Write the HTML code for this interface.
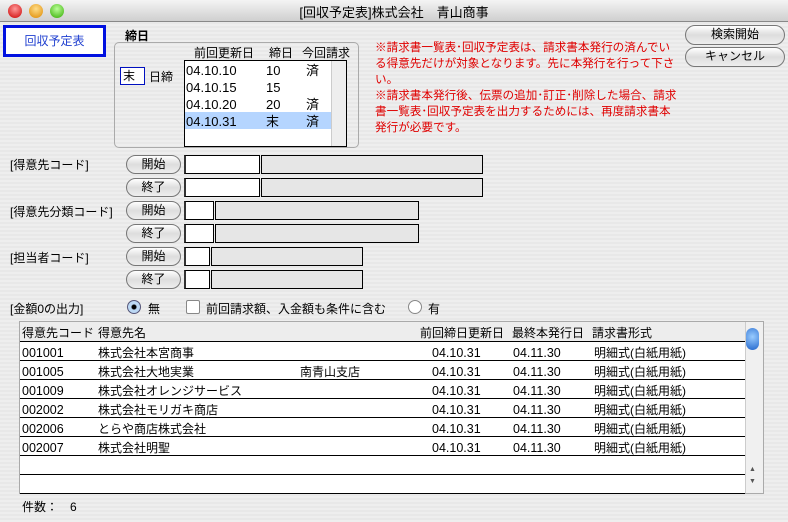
<!DOCTYPE html><html><head><meta charset="utf-8"><style>
*{margin:0;padding:0;box-sizing:border-box}
body{width:788px;height:522px;overflow:hidden;background:#ededed repeating-linear-gradient(#eeeeee 0 2px,#e8e8e8 2px 4px);font-family:"Liberation Sans","Noto Sans CJK JP",sans-serif;font-size:12px;color:#000;position:relative}
.a{position:absolute;white-space:nowrap}
.tb{left:0;top:0;width:788px;height:22px;background:linear-gradient(#f4f4f4,#cfcfcf);border-bottom:1px solid #888}
.dot{width:14px;height:14px;border-radius:50%;top:4px}
.btn{background:linear-gradient(#fff,#ddd 50%,#eee);border:1px solid #777;border-radius:10px;text-align:center;font-size:12px;line-height:17px}
.f{background:#fff;border:1px solid #000;border-left:2px solid #333;height:19px}
.g{background:#e6e6e6;border:1px solid #000;height:19px}
.red{color:#e00000;line-height:16px;font-size:11.6px}
.row{left:20px;width:725px;height:19px;border-bottom:1px solid #000;background:#fff}
</style></head><body>
<div class="a tb"></div>
<div class="a dot" style="left:8px;background:radial-gradient(circle at 50% 35%,#f99,#c00)"></div>
<div class="a dot" style="left:29px;background:radial-gradient(circle at 50% 35%,#fd8,#d80)"></div>
<div class="a dot" style="left:50px;background:radial-gradient(circle at 50% 35%,#bf9,#3a0)"></div>
<div class="a" style="left:0;width:788px;top:2px;text-align:center;font-size:13px">[回収予定表]株式会社　青山商事</div>

<div class="a" style="left:3px;top:25px;width:103px;height:32px;border:3px solid #0010e0;background:#fff;color:#2040d0;text-align:center;line-height:26px">回収予定表</div>
<div class="a" style="left:125px;top:27px;font-weight:bold">締日</div>
<div class="a" style="left:114px;top:42px;width:245px;height:106px;border:1px solid #aaa;border-radius:5px"></div>
<div class="a" style="left:120px;top:67px;width:25px;height:18px;border:1px solid #0010c0;background:#fff;line-height:16px;padding-left:2px">末</div>
<div class="a" style="left:149px;top:68px">日締</div>
<div class="a" style="left:194px;top:44px">前回更新日</div>
<div class="a" style="left:269px;top:44px">締日</div>
<div class="a" style="left:302px;top:44px">今回請求</div>
<div class="a" style="left:184px;top:60px;width:163px;height:87px;border:1px solid #000;background:#fff">
<div class="a" style="right:0;top:0;width:15px;height:85px;background:#eee;border-left:1px solid #ccc"></div>
<div class="a" style="left:0;top:51px;width:146px;height:17px;background:#b5d5ff"></div>
<div class="a" style="left:1px;top:1px;font-size:13px;line-height:17px">04.10.10<br>04.10.15<br>04.10.20<br>04.10.31</div>
<div class="a" style="left:81px;top:1px;font-size:13px;line-height:17px">10<br>15<br>20<br>末</div>
<div class="a" style="left:121px;top:1px;font-size:13px;line-height:17px">済<br>&nbsp;<br>済<br>済</div>
</div>

<div class="a red" style="left:375px;top:40px">※請求書一覧表･回収予定表は、請求書本発行の済んでい<br>る得意先だけが対象となります。先に本発行を行って下さ<br>い。<br>※請求書本発行後、伝票の追加･訂正･削除した場合、請求<br>書一覧表･回収予定表を出力するためには、再度請求書本<br>発行が必要です。</div>
<div class="a btn" style="left:685px;top:25px;width:100px;height:20px">検索開始</div>
<div class="a btn" style="left:685px;top:47px;width:100px;height:20px">キャンセル</div>

<div class="a" style="left:10px;top:156px">[得意先コード]</div>
<div class="a btn" style="left:126px;top:155px;width:55px;height:19px">開始</div>
<div class="a btn" style="left:126px;top:178px;width:55px;height:19px">終了</div>
<div class="a f" style="left:184px;top:155px;width:76px"></div><div class="a g" style="left:261px;top:155px;width:222px"></div>
<div class="a f" style="left:184px;top:178px;width:76px"></div><div class="a g" style="left:261px;top:178px;width:222px"></div>

<div class="a" style="left:10px;top:203px">[得意先分類コード]</div>
<div class="a btn" style="left:126px;top:201px;width:55px;height:19px">開始</div>
<div class="a btn" style="left:126px;top:224px;width:55px;height:19px">終了</div>
<div class="a f" style="left:184px;top:201px;width:30px"></div><div class="a g" style="left:215px;top:201px;width:204px"></div>
<div class="a f" style="left:184px;top:224px;width:30px"></div><div class="a g" style="left:215px;top:224px;width:204px"></div>

<div class="a" style="left:10px;top:249px">[担当者コード]</div>
<div class="a btn" style="left:126px;top:247px;width:55px;height:19px">開始</div>
<div class="a btn" style="left:126px;top:270px;width:55px;height:19px">終了</div>
<div class="a f" style="left:184px;top:247px;width:26px"></div><div class="a g" style="left:211px;top:247px;width:152px"></div>
<div class="a f" style="left:184px;top:270px;width:26px"></div><div class="a g" style="left:211px;top:270px;width:152px"></div>

<div class="a" style="left:10px;top:300px">[金額0の出力]</div>
<div class="a" style="left:127px;top:300px;width:14px;height:14px;border-radius:50%;border:1px solid #557;background:radial-gradient(circle,#000 2px,#bcd8f4 3px)"></div>
<div class="a" style="left:148px;top:300px">無</div>
<div class="a" style="left:186px;top:300px;width:14px;height:14px;border:1px solid #888;border-radius:2px;background:#fff"></div>
<div class="a" style="left:206px;top:300px">前回請求額、入金額も条件に含む</div>
<div class="a" style="left:408px;top:300px;width:14px;height:14px;border-radius:50%;border:1px solid #888;background:#fff"></div>
<div class="a" style="left:428px;top:300px">有</div>

<div class="a" style="left:19px;top:321px;width:745px;height:173px;border:1px solid #aaa;background:#fff"></div>
<div class="a" style="left:20px;top:322px;width:725px;height:20px;background:#ededed;border-bottom:1px solid #000"></div>
<div class="a" style="left:22px;top:324px">得意先コード</div><div class="a" style="left:98px;top:324px">得意先名</div><div class="a" style="left:420px;top:324px">前回締日更新日</div><div class="a" style="left:512px;top:324px">最終本発行日</div><div class="a" style="left:592px;top:324px">請求書形式</div>
<div class="a row" style="top:342px"></div><div class="a row" style="top:361px"></div><div class="a row" style="top:380px"></div><div class="a row" style="top:399px"></div><div class="a row" style="top:418px"></div><div class="a row" style="top:437px"></div><div class="a row" style="top:456px"></div><div class="a row" style="top:475px"></div>
<div class="a" style="left:22px;top:344px;line-height:19px;font-size:12.5px">001001<br>001005<br>001009<br>002002<br>002006<br>002007</div>
<div class="a" style="left:98px;top:344px;line-height:19px">株式会社本宮商事<br>株式会社大地実業<br>株式会社オレンジサービス<br>株式会社モリガキ商店<br>とらや商店株式会社<br>株式会社明聖</div>
<div class="a" style="left:300px;top:363px">南青山支店</div>
<div class="a" style="left:432px;top:344px;line-height:19px;font-size:12.5px">04.10.31<br>04.10.31<br>04.10.31<br>04.10.31<br>04.10.31<br>04.10.31</div>
<div class="a" style="left:513px;top:344px;line-height:19px;font-size:12.5px">04.11.30<br>04.11.30<br>04.11.30<br>04.11.30<br>04.11.30<br>04.11.30</div>
<div class="a" style="left:594px;top:344px;line-height:19px">明細式(白紙用紙)<br>明細式(白紙用紙)<br>明細式(白紙用紙)<br>明細式(白紙用紙)<br>明細式(白紙用紙)<br>明細式(白紙用紙)</div>
<div class="a" style="left:745px;top:322px;width:18px;height:171px;background:#f0f0f0;border-left:1px solid #ccc"></div>
<div class="a" style="left:746px;top:328px;width:13px;height:22px;border-radius:7px;background:radial-gradient(circle at 50% 40%,#9cf,#2266cc)"></div>
<div class="a" style="left:749px;top:464px;font-size:7px;color:#555;line-height:12px">▲<br>▼</div>
<div class="a" style="left:22px;top:498px">件数：　6</div>
</body></html>
